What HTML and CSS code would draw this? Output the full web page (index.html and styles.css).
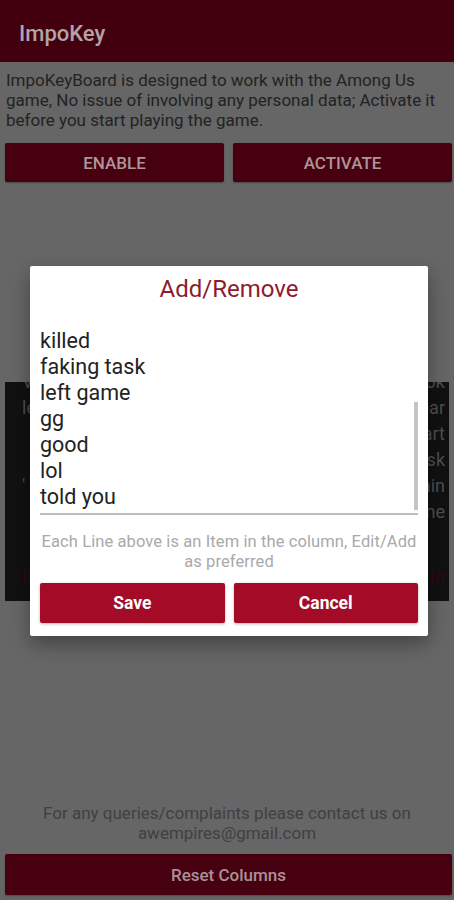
FILE: index.html
```html
<!DOCTYPE html>
<html lang="en">
<head>
  <meta charset="UTF-8">
  <meta name="viewport" content="width=device-width, initial-scale=1.0">
  <title>ImpoKey</title>
  <link rel="stylesheet" href="styles.css">
</head>
<body>
<div class="app">
  <div class="appbar">ImpoKey</div>

  <p class="intro">ImpoKeyBoard is designed to work with the Among Us game, No issue of involving any personal data; Activate it before you start playing the game.</p>

  <div class="actions">
    <button class="btn">ENABLE</button>
    <button class="btn">ACTIVATE</button>
  </div>

  <div class="preview">
    <div class="preview-rows">
      <div class="row"><span>Vote</span><span>Who</span><span>Look</span></div>
      <div class="row"><span>left</span><span>Where</span><span>Clear</span></div>
      <div class="row"><span></span><span>Sus</span><span>Start</span></div>
      <div class="row"><span></span><span>Self</span><span>Task</span></div>
      <div class="row"><span>'</span><span>Skip</span><span>Explain</span></div>
      <div class="row"><span></span><span>Body</span><span>Done</span></div>
    </div>
    <div class="row edit-row"><span>Edit</span><span>Edit</span><span>Edit</span></div>
  </div>

  <div class="spacer"></div>

  <p class="contact">For any queries/complaints please contact us on awempires@gmail.com</p>
  <button class="btn reset-btn">Reset Columns</button>
</div>

<div class="dialog">
  <div class="dialog-title">Add/Remove</div>
  <div class="editor">
    <div class="editor-lines">
      <div>killed</div>
      <div>faking task</div>
      <div>left game</div>
      <div>gg</div>
      <div>good</div>
      <div>lol</div>
      <div>told you</div>
    </div>
    <div class="scroll-thumb"></div>
  </div>
  <p class="helper">Each Line above is an Item in the column, Edit/Add as preferred</p>
  <div class="dialog-actions">
    <button class="dialog-btn">Save</button>
    <button class="dialog-btn">Cancel</button>
  </div>
</div>
</body>
</html>
```

FILE: styles.css
```css
body {
  margin: 0;
  font-family: Roboto, "Liberation Sans", sans-serif;
  background-color: #666;
}
.app {
  display: flex;
  flex-direction: column;
  min-height: 900px;
  box-sizing: border-box;
  padding-bottom: 5px;
}
.appbar {
  height: 62px;
  box-sizing: border-box;
  padding: 4px 0 0 19px;
  display: flex;
  align-items: center;
  background-color: #42000f;
  color: #b2a3a6;
  font-size: 22px;
  font-weight: 500;
}
.intro {
  margin: 8px 6px 0;
  font-size: 17px;
  line-height: 20px;
  color: #222;
}
.actions {
  display: flex;
  gap: 9px;
  margin: 13px 2px 0 5px;
}
.btn {
  flex: 1;
  height: 39px;
  border: none;
  border-radius: 2px;
  background-color: #47000f;
  color: #ad959a;
  font-family: inherit;
  font-size: 17px;
  font-weight: 500;
  box-shadow: 0 1px 2px rgba(0, 0, 0, 0.3);
}
.preview {
  margin: 200px 5px 0;
  height: 219px;
  background-color: #111;
  overflow: hidden;
}
.preview-rows {
  margin-top: -13px;
}
.row {
  display: grid;
  grid-template-columns: 1fr 1fr 1fr;
  padding: 0 4px 0 17px;
  font-size: 18px;
  line-height: 26px;
  color: #4e4e4e;
}
.row span:nth-child(2) {
  text-align: center;
}
.row span:nth-child(3) {
  text-align: right;
}
.edit-row {
  margin-top: 40px;
  color: #2e0910;
}
.spacer {
  flex: 1;
}
.contact {
  margin: 0 30px 11px;
  text-align: center;
  font-size: 17px;
  line-height: 20px;
  color: #404040;
}
.reset-btn {
  flex: none;
  margin: 0 2px 0 5px;
  height: 41px;
  color: #a8929a;
}
.dialog {
  position: absolute;
  top: 266px;
  left: 30px;
  width: 398px;
  box-sizing: border-box;
  padding: 0 10px 13px;
  background-color: #fff;
  border-radius: 2px;
  box-shadow: 0 8px 20px rgba(0, 0, 0, 0.35);
}
.dialog-title {
  padding-top: 9px;
  text-align: center;
  font-size: 24px;
  line-height: 28px;
  color: #8e1b2e;
}
.editor {
  position: relative;
  margin-top: 25px;
  border-bottom: 2px solid #bdbdbd;
  padding-bottom: 3px;
}
.editor-lines {
  font-size: 21.5px;
  line-height: 26px;
  color: #222;
}
.scroll-thumb {
  position: absolute;
  right: 0;
  bottom: 3px;
  width: 4px;
  height: 108px;
  background-color: #c4c4c4;
}
.helper {
  margin: 17px -7px 0;
  text-align: center;
  font-size: 16.5px;
  letter-spacing: 0.1px;
  line-height: 20px;
  color: #a9a9a9;
}
.dialog-actions {
  display: flex;
  gap: 9px;
  margin-top: 11px;
}
.dialog-btn {
  flex: 1;
  height: 40px;
  border: none;
  border-radius: 2px;
  background-color: #a30b27;
  color: #fff;
  font-family: inherit;
  font-size: 17.5px;
  font-weight: 700;
  box-shadow: 0 1px 3px rgba(0, 0, 0, 0.3);
}
```
